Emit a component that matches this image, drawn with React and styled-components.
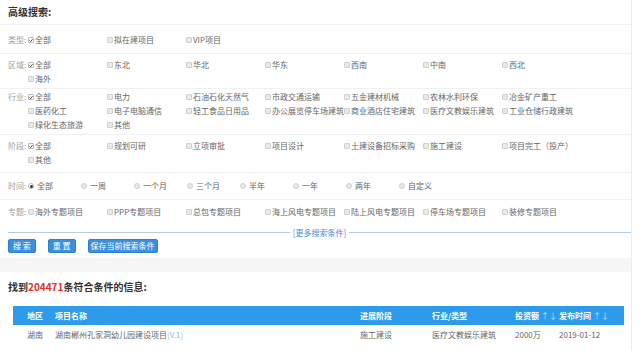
import styled, { createGlobalStyle } from "styled-components"

const GlobalStyle = createGlobalStyle`
    body {
        margin: 0;
        background: #fff;
        font-family: "Noto Sans CJK SC", "Noto Sans", sans-serif;
    }
`
const Page = styled.div`
    width: 632px;
    min-height: 351px;
    border-right: 1px solid #ececec;
    box-sizing: border-box;
`
const Title = styled.h2`
    margin: 0;
    height: 24px;
    line-height: 24px;
    padding-left: 8px;
    font-size: 10px;
    font-weight: 700;
    color: #333;
    border-bottom: 1px solid #f1f1f1;
`
const FilterRow = styled.div`
    display: flex;
    padding: ${p => p.$top}px 0 ${p => p.$bottom}px 8px;
    border-bottom: ${p => (p.$last ? "none" : "1px solid #f1f1f1")};
    font-size: 8px;
    line-height: 14px;
`
const Label = styled.span`
    width: 20px;
    flex: none;
    color: #a0a0a0;
`
const Options = styled.div`
    display: flex;
    flex-wrap: wrap;
    width: 553px;
`
const Option = styled.label`
    display: flex;
    align-items: center;
    width: ${p => p.$w || 79}px;
    white-space: nowrap;
    color: #666;
    gap: ${p => (p.$radio ? 3 : 1)}px;
`
const Box = styled.span`
    width: 6px;
    height: 6px;
    box-sizing: border-box;
    border: 1px solid ${p => (p.$on ? "#bbb" : "#d0d0d0")};
    background: ${p => (p.$on ? "#fff" : "#e9e9e9")};
    border-radius: ${p => (p.$radio ? "50%" : "1px")};
    display: flex;
    align-items: center;
    justify-content: center;
    flex: none;
`
const Dot = styled.span`
    width: 3px;
    height: 3px;
    border-radius: 50%;
    background: #333;
`
const MoreBar = styled.div`
    display: flex;
    align-items: center;
    gap: 3px;
    height: 14px;
    padding-left: 8px;
    font-size: 8px;
    color: #4a8fd2;
    &::before, &::after {
        content: "";
        flex: 1;
        height: 1px;
        background: #b3cde2;
    }
`
const ButtonBar = styled.div`
    display: flex;
    gap: 12px;
    padding-left: 8px;
`
const Button = styled.button`
    height: 14px;
    padding: 0 ${p => p.$pad || 4}px;
    border: 1px solid #2f80cc;
    border-radius: 2px;
    background: #3a90de;
    color: #fff;
    font-family: inherit;
    font-size: 8px;
    line-height: 12px;
    white-space: pre;
    cursor: pointer;
`
const Band = styled.div`
    height: 14px;
    margin-top: 5px;
    background: #f6f6f6;
`
const ResultTitle = styled.h3`
    margin: 8px 0 0;
    padding-left: 8px;
    line-height: 14px;
    font-size: 10px;
    font-weight: 700;
    color: #333;
    span {
        color: #e0302b;
    }
`
const Table = styled.div`
    margin: 12px 7px 0 13px;
    font-size: 8px;
`
const TableRow = styled.div`
    display: grid;
    grid-template-columns: 28px 305px 72px 83px 44px 1fr;
    padding-left: 14px;
    height: ${p => (p.$head ? 19 : 20)}px;
    line-height: ${p => (p.$head ? 19 : 20)}px;
    background: ${p => (p.$head ? "#2e9bea" : "transparent")};
    color: ${p => (p.$head ? "#fff" : "#666")};
    font-weight: ${p => (p.$head ? 700 : 400)};
    white-space: nowrap;
`
const Sort = styled.span`
    color: #bfe0fb;
    font-weight: 400;
    margin-left: 2px;
`
const Version = styled.span`
    color: #8fb8dc;
`

const rows = [
    { label: "类型", top: 8, bottom: 6, items: ["拟在建项目", "VIP项目"] },
    { label: "区域", top: 4, bottom: 2, items: ["东北", "华北", "华东", "西南", "中南", "西北", "海外"] },
    {
        label: "行业", top: 1, bottom: 2,
        items: ["电力", "石油石化天然气", "市政交通运输", "五金建材机械", "农林水利环保", "冶金矿产重工",
            "医药化工", "电子电脑通信", "轻工食品日用品", "办公展览停车场建筑", "商业酒店住宅建筑",
            "医疗文教娱乐建筑", "工业仓储行政建筑", "绿化生态旅游", "其他"],
    },
    { label: "阶段", top: 4, bottom: 5, items: ["规划可研", "立项审批", "项目设计", "土建设备招标采购", "施工建设", "项目完工（投产）", "其他"] },
]
const times = ["一周", "一个月", "三个月", "半年", "一年", "两年", "自定义"]
const topics = ["海外专题项目", "PPP专题项目", "总包专题项目", "海上风电专题项目", "陆上风电专题项目", "停车场专题项目", "装修专题项目"]

function Check({ on }) {
    return (
        <Box $on={on}>
            {on && (
                <svg width="5" height="5" viewBox="0 0 5 5">
                    <path d="M0.6 2.6 L2 3.9 L4.5 0.8" fill="none" stroke="#333" strokeWidth="1.1" />
                </svg>
            )}
        </Box>
    )
}

function CheckRow({ label, items, top, bottom, last }) {
    return (
        <FilterRow $top={top} $bottom={bottom} $last={last}>
            <Label>{label}:</Label>
            <Options>
                <Option><Check on />全部</Option>
                {items.map(t => (
                    <Option key={t}><Check />{t}</Option>
                ))}
            </Options>
        </FilterRow>
    )
}

export default function App() {
    return (
        <Page>
            <GlobalStyle />
            <Title>高级搜索:</Title>
            {rows.map(r => <CheckRow key={r.label} {...r} />)}
            <FilterRow $top={6} $bottom={6}>
                <Label>时间:</Label>
                <Options>
                    <Option $radio $w={53}><Box $radio $on><Dot /></Box>全部</Option>
                    {times.map(t => (
                        <Option key={t} $radio $w={53}><Box $radio />{t}</Option>
                    ))}
                </Options>
            </FilterRow>
            <FilterRow $top={5} $bottom={6} $last>
                <Label>专题:</Label>
                <Options>
                    {topics.map(t => (
                        <Option key={t}><Check />{t}</Option>
                    ))}
                </Options>
            </FilterRow>
            <MoreBar>[更多搜索条件]</MoreBar>
            <ButtonBar>
                <Button>搜 索</Button>
                <Button>重 置</Button>
                <Button $pad={2}>保存当前搜索条件</Button>
            </ButtonBar>
            <Band />
            <ResultTitle>找到<span>204471</span>条符合条件的信息:</ResultTitle>
            <Table>
                <TableRow $head>
                    <span>地区</span>
                    <span>项目名称</span>
                    <span>进展阶段</span>
                    <span>行业/类型</span>
                    <span>投资额<Sort>↑↓</Sort></span>
                    <span>发布时间<Sort>↑↓</Sort></span>
                </TableRow>
                <TableRow>
                    <span>湖南</span>
                    <span>湖南郴州孔家洞幼儿园建设项目<Version>(V.1)</Version></span>
                    <span>施工建设</span>
                    <span>医疗文教娱乐建筑</span>
                    <span>2000万</span>
                    <span>2019-01-12</span>
                </TableRow>
            </Table>
        </Page>
    )
}
